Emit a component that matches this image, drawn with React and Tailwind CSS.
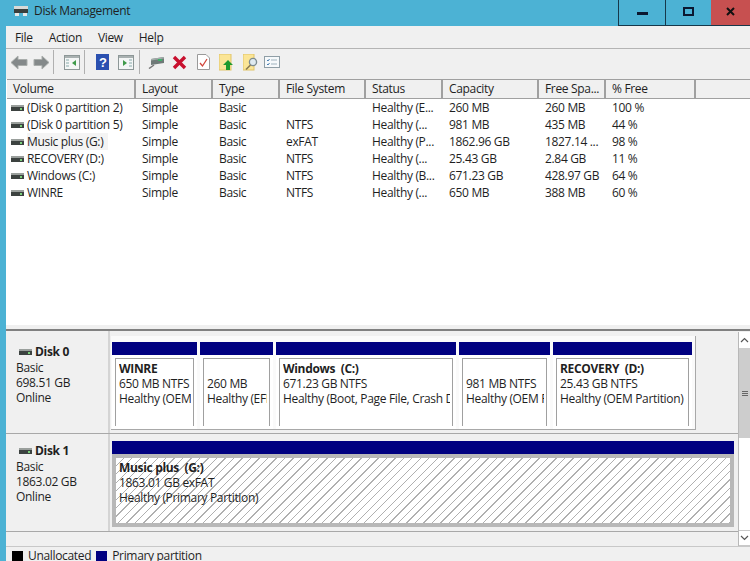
import React from 'react';

const font = "font-['Open_Sans','Noto_Sans',sans-serif]";

const columns = [
  { title: 'Volume', width: 'w-[129px]' },
  { title: 'Layout', width: 'w-[77px]' },
  { title: 'Type', width: 'w-[67px]' },
  { title: 'File System', width: 'w-[86px]' },
  { title: 'Status', width: 'w-[77px]' },
  { title: 'Capacity', width: 'w-[96px]' },
  { title: 'Free Spa...', width: 'w-[67px]' },
  { title: '% Free', width: 'w-[90px]' },
];

const volumes = [
  ['(Disk 0 partition 2)', 'Simple', 'Basic', '', 'Healthy (E...', '260 MB', '260 MB', '100 %'],
  ['(Disk 0 partition 5)', 'Simple', 'Basic', 'NTFS', 'Healthy (...', '981 MB', '435 MB', '44 %'],
  ['Music plus (G:)', 'Simple', 'Basic', 'exFAT', 'Healthy (P...', '1862.96 GB', '1827.14 ...', '98 %'],
  ['RECOVERY (D:)', 'Simple', 'Basic', 'NTFS', 'Healthy (...', '25.43 GB', '2.84 GB', '11 %'],
  ['Windows (C:)', 'Simple', 'Basic', 'NTFS', 'Healthy (B...', '671.23 GB', '428.97 GB', '64 %'],
  ['WINRE', 'Simple', 'Basic', 'NTFS', 'Healthy (...', '650 MB', '388 MB', '60 %'],
];

const partitions = [
  { name: 'WINRE', size: '650 MB NTFS', status: 'Healthy (OEM Partition)', width: 'w-[85px]' },
  { name: '', size: '260 MB', status: 'Healthy (EFI System Partition)', width: 'w-[73px]' },
  { name: 'Windows  (C:)', size: '671.23 GB NTFS', status: 'Healthy (Boot, Page File, Crash Dump, Primary Partition)', width: 'w-[180px]' },
  { name: '', size: '981 MB NTFS', status: 'Healthy (OEM Partition)', width: 'w-[91px]' },
  { name: 'RECOVERY  (D:)', size: '25.43 GB NTFS', status: 'Healthy (OEM Partition)', width: 'w-[139px]' },
];

function DriveIcon({ className }) {
  return (
    <svg className={className} width="13" height="6" viewBox="0 0 13 6">
      <rect x="0" y="0" width="13" height="2" fill="#9a9f9c" />
      <rect x="0" y="2" width="13" height="4" fill="#3c4240" />
      <rect x="9" y="3" width="2" height="2" fill="#7ad07a" />
    </svg>
  );
}

function Toolbar() {
  return (
    <div className="flex h-[31px] shrink-0 items-center border-t border-[#b4b4b4] pb-[4px] pl-[4px]">
      <svg width="18" height="15" viewBox="0 0 18 15">
        <path d="M8 1 L1 7.5 L8 14 V10.5 H17 V4.5 H8 Z" fill="#84898a" stroke="#a9adab" />
      </svg>
      <svg className="ml-[5px]" width="17" height="15" viewBox="0 0 17 15">
        <path d="M9 1 L16 7.5 L9 14 V10.5 H1 V4.5 H9 Z" fill="#84898a" stroke="#a9adab" />
      </svg>
      <div className="ml-[3px] h-[24px] w-px bg-[#b0b0b0]" />
      <svg className="ml-[10px]" width="16" height="15" viewBox="0 0 16 15">
        <rect x="0.5" y="0.5" width="15" height="14" fill="#f4f6f6" stroke="#8d9797" />
        <rect x="1" y="1" width="14" height="2" fill="#a9b1b1" />
        <path d="M2 5H5M2 8H5M2 11H5" stroke="#8aa" />
        <path d="M12 5 L8 8 L12 11 Z" fill="#3f9a4a" />
      </svg>
      <div className="ml-[4px] h-[24px] w-px bg-[#b0b0b0]" />
      <svg className="ml-[11px]" width="13" height="16" viewBox="0 0 13 16">
        <rect width="13" height="16" fill="#2b50b0" />
        <text x="3" y="13" fontSize="13" fontWeight="700" fill="#ffffff" fontFamily="Liberation Sans, sans-serif">?</text>
      </svg>
      <svg className="ml-[9px]" width="16" height="15" viewBox="0 0 16 15">
        <rect x="0.5" y="0.5" width="15" height="14" fill="#f4f6f6" stroke="#8d9797" />
        <rect x="1" y="1" width="14" height="2" fill="#a9b1b1" />
        <path d="M11 5H14M11 8H14M11 11H14" stroke="#8aa" />
        <path d="M5 5 L9 8 L5 11 Z" fill="#3f9a4a" />
      </svg>
      <div className="ml-[5px] h-[24px] w-px bg-[#b0b0b0]" />
      <svg className="ml-[8px]" width="16" height="14" viewBox="0 0 16 14">
        <path d="M3 4 L16 2 V8 L3 10 Z" fill="#6f7a78" />
        <path d="M3 4 L16 2 V3.5 L3 5.5 Z" fill="#a4adab" />
        <rect x="10" y="4" width="4" height="2" fill="#3fb06a" />
        <path d="M6 10 L1 13.5" stroke="#777" strokeWidth="1.5" />
      </svg>
      <svg className="ml-[8px]" width="15" height="15" viewBox="0 0 15 15">
        <path d="M2 2 L13 13 M13 2 L2 13" stroke="#c8102e" strokeWidth="3.4" />
      </svg>
      <svg className="ml-[10px]" width="13" height="16" viewBox="0 0 13 16">
        <path d="M0.5 0.5 H9 L12.5 4 V15.5 H0.5 Z" fill="#ffffff" stroke="#9a9a9a" />
        <path d="M3 9 L5.5 12 L10 5" fill="none" stroke="#d0453a" strokeWidth="1.3" />
      </svg>
      <svg className="ml-[9px]" width="15" height="17" viewBox="0 0 15 17">
        <rect width="12" height="16" fill="#fbe596" stroke="#e0c468" />
        <path d="M9 6 L14 11 H11 V16 H7 V11 H4 Z" fill="#1f9a2e" />
      </svg>
      <svg className="ml-[9px]" width="15" height="17" viewBox="0 0 15 17">
        <rect width="11" height="16" fill="#fbe596" stroke="#e0c468" />
        <circle cx="10" cy="8" r="3.6" fill="#dfeaf0" stroke="#7c8b90" strokeWidth="1.3" />
        <path d="M7.5 11 L3 15.5" stroke="#8a7a50" strokeWidth="1.6" />
      </svg>
      <svg className="ml-[6px]" width="16" height="12" viewBox="0 0 16 12">
        <rect x="0.5" y="0.5" width="15" height="11" fill="#f6f9fb" stroke="#8f9ea6" />
        <path d="M3 4 L4 5 L5.5 3 M3 8 L4 9 L5.5 7" fill="none" stroke="#4a7fb0" />
        <path d="M7 4H13M7 8H13" stroke="#9fb2bd" />
      </svg>
    </div>
  );
}

function VolumeList() {
  return (
    <div className="flex h-[246px] shrink-0 flex-col overflow-hidden bg-white pl-px">
      <div className="flex h-[20px] shrink-0 border-y border-[#a0a0a0] bg-[#f0f0f0]">
        {columns.map((col, i) => (
          <div key={col.title} className={`${col.width} shrink-0 border-r-2 border-[#a0a0a0] pl-[6px] leading-[18px]`}>
            {col.title}
          </div>
        ))}
      </div>
      <div>
        {volumes.map((row) => (
          <div key={row[0]} className="flex h-[17px] leading-[17px]">
            {row.map((cell, i) => (
              <div key={i} className={`${columns[i].width} shrink-0 overflow-hidden whitespace-nowrap ${i === 0 ? 'pl-[4px]' : 'pl-[6px]'}`}>
                {i === 0 ? (
                  <div className="flex items-center gap-[3px]">
                    <DriveIcon className="shrink-0" />
                    <span className={row[0] === 'Music plus (G:)' ? 'bg-[#f4f4f4] pr-[5px]' : ''}>{cell}</span>
                  </div>
                ) : cell}
              </div>
            ))}
          </div>
        ))}
      </div>
    </div>
  );
}

function DiskLabel({ name, size, className }) {
  return (
    <div className={`w-[104px] shrink-0 border-r-2 border-[#d4d4d4] pl-[10px] leading-[15px] ${className}`}>
      <div className="mb-px flex items-center gap-[3px] pl-[3px] font-bold">
        <DriveIcon />
        {name}
      </div>
      <div>Basic</div>
      <div>{size}</div>
      <div>Online</div>
    </div>
  );
}

function Partition({ name, size, status, width }) {
  return (
    <div className={`${width} shrink-0`}>
      <div className="h-[13px] bg-[#000080]" />
      <div className="h-[74px] bg-white p-[3px]">
        <div className="h-[68px] border-l border-t border-r border-[#a0a0a0] pl-[3px] pr-[2px] pt-[2px] leading-[15px]">
          <div className="overflow-hidden whitespace-nowrap">
            <div className="h-[15px] whitespace-pre font-bold">{name}</div>
            <div>{size}</div>
            <div>{status}</div>
          </div>
        </div>
      </div>
    </div>
  );
}

function DiskPanes() {
  return (
    <div className="flex h-[217px] shrink-0 border-t-2 border-[#808080]">
      <div className="w-[732px] shrink-0">
        <div className="flex h-[103px] border-b border-[#a8a8a8]">
          <DiskLabel name="Disk 0" size="698.51 GB" className="pt-[13px]" />
          <div className="mt-[5px] ml-px h-[94px] w-[585px] border-b border-r border-[#a8a8a8] bg-[#fafafa] pl-px pt-[6px]">
            <div className="flex gap-[3px]">
              {partitions.map((p) => (
                <Partition key={p.size} {...p} />
              ))}
            </div>
          </div>
        </div>
        <div className="flex h-[98px] border-b border-[#a8a8a8]">
          <DiskLabel name="Disk 1" size="1863.02 GB" className="pt-[9px]" />
          <div className="ml-px flex-1 pl-px pt-[7px] pr-[4px]">
            <div className="h-[13px] bg-[#000080]" />
            <div className="h-[73px] border-[4px] border-[#b8b8b8]">
              <div className="h-full whitespace-pre bg-[repeating-linear-gradient(135deg,#ffffff_0px,#ffffff_5px,#b0b0b0_5px,#b0b0b0_6px)] pl-[3px] pt-[2px] leading-[15px]">
                <div className="font-bold">Music plus  (G:)</div>
                <div>1863.01 GB exFAT</div>
                <div>Healthy (Primary Partition)</div>
              </div>
            </div>
          </div>
        </div>
      </div>
      <div className="mt-px flex h-[214px] w-[12px] shrink-0 flex-col border-l border-[#b8b8b8] bg-white">
        <div className="flex h-[16px] items-center justify-center">
          <svg width="9" height="6" viewBox="0 0 9 6">
            <path d="M1 5 L4.5 1.5 L8 5" fill="none" stroke="#555" strokeWidth="1.2" />
          </svg>
        </div>
        <div className="flex h-[90px] flex-col items-center justify-center gap-px bg-[#cdcdcd]">
          <div className="h-px w-[6px] bg-[#666]" />
          <div className="h-px w-[6px] bg-[#666]" />
          <div className="h-px w-[6px] bg-[#666]" />
        </div>
        <div className="h-[92px]" />
        <div className="flex h-[16px] items-center justify-center border-y border-[#c8c8c8]">
          <svg width="9" height="6" viewBox="0 0 9 6">
            <path d="M1 1 L4.5 4.5 L8 1" fill="none" stroke="#555" strokeWidth="1.2" />
          </svg>
        </div>
      </div>
    </div>
  );
}

export default function App() {
  return (
    <div className={`${font} flex h-[561px] w-[750px] flex-col overflow-hidden bg-[#4cb2d4] text-[12px] tracking-[-0.33px] text-[#1f1f1f]`}>
      <div className="flex h-[26px] shrink-0 items-center justify-between">
        <div className="flex items-center gap-[5px] pl-[13px] pb-[4px]">
          <svg width="16" height="14" viewBox="0 0 16 14">
            <rect x="1" y="2" width="14" height="3" fill="#d8dad8" />
            <rect x="1" y="5" width="14" height="4" fill="#3a3f3d" />
            <rect x="2" y="9" width="4" height="3" fill="#e8e8e8" />
            <rect x="10" y="9" width="4" height="3" fill="#e8e8e8" />
          </svg>
          <span>Disk Management</span>
        </div>
        <div className="flex h-[26px] self-start border-b border-[#16384a]">
          <div className="flex w-[47px] items-center justify-center border-l border-[#16384a] pt-[1px]">
            <div className="mt-[1px] h-[3px] w-[11px] bg-[#0b1830]" />
          </div>
          <div className="flex w-[46px] items-center justify-center border-l border-[#16384a] pb-[3px]">
            <div className="h-[9px] w-[11px] border-2 border-[#0b1830]" />
          </div>
          <div className="flex w-[39px] items-center justify-center bg-[#c75050] pb-[3px]">
            <svg width="9" height="9" viewBox="0 0 9 9">
              <path d="M1 1 L8 8 M8 1 L1 8" stroke="#111" strokeWidth="2" />
            </svg>
          </div>
        </div>
      </div>
      <div className="ml-[6px] flex min-h-0 flex-1 flex-col bg-[#f0f0f0]">
        <div className="flex h-[22px] shrink-0 items-center gap-[16px] pl-[9px] pt-px">
          <span>File</span>
          <span>Action</span>
          <span>View</span>
          <span>Help</span>
        </div>
        <Toolbar />
        <VolumeList />
        <div className="h-[4px] shrink-0" />
        <DiskPanes />
        <div className="flex shrink-0 items-start border-t border-[#c8c8c8] pl-[6px] pt-px leading-[15px]">
          <div className="mt-[3px] h-[11px] w-[11px] bg-black" />
          <span className="ml-[5px]">Unallocated</span>
          <div className="ml-[5px] mt-[3px] h-[11px] w-[11px] bg-[#000080]" />
          <span className="ml-[5px]">Primary partition</span>
        </div>
      </div>
    </div>
  );
}
